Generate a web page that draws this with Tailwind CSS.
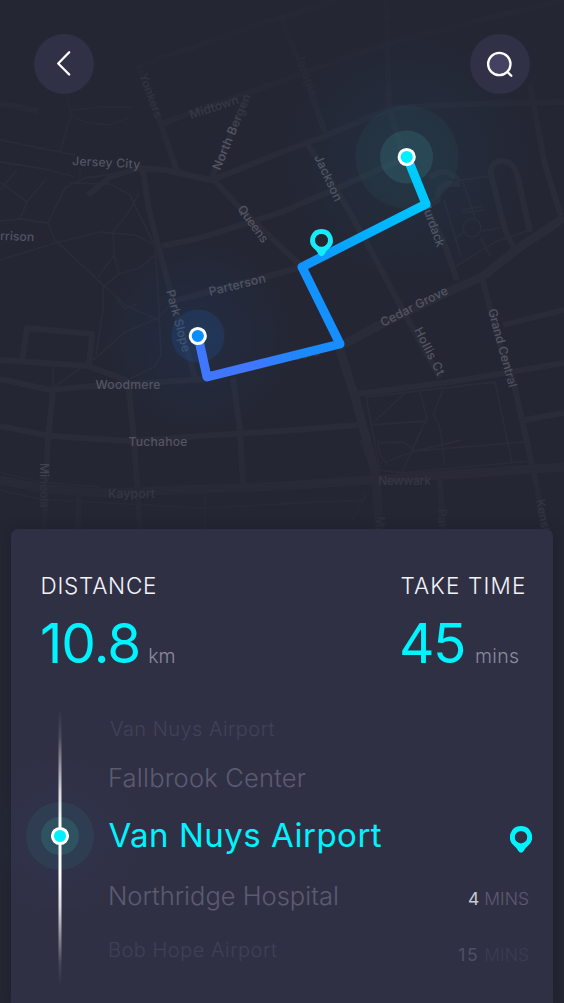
<!DOCTYPE html>
<html lang="en">
<head>
<meta charset="utf-8">
<title>Route</title>
<script src="https://cdn.jsdelivr.net/npm/@tailwindcss/browser@4"></script>
</head>
<body class="bg-[#242633]">
<main class="relative flex h-[1003px] w-[564px] flex-col overflow-hidden bg-[#242633] font-['Inter','Liberation_Sans',sans-serif] font-light">

  <!-- Map -->
  <svg class="absolute inset-0" width="564" height="1003" viewBox="0 0 564 1003" fill="none">
    <defs>
      <linearGradient id="route" gradientUnits="userSpaceOnUse" x1="420" y1="160" x2="200" y2="375">
        <stop offset="0" stop-color="#00d0ff"/><stop offset=".2" stop-color="#00baff"/><stop offset=".5" stop-color="#0f94ff"/><stop offset=".72" stop-color="#1d88ff"/><stop offset=".85" stop-color="#3f78ff"/><stop offset="1" stop-color="#3f78ff"/>
      </linearGradient>
      <radialGradient id="glowBlue"><stop offset="0" stop-color="#1e4a8c" stop-opacity=".18"/><stop offset=".5" stop-color="#1e4a8c" stop-opacity=".09"/><stop offset="1" stop-color="#1e4a8c" stop-opacity="0"/></radialGradient>
      <radialGradient id="glowCyan"><stop offset="0" stop-color="#1f5a84" stop-opacity=".17"/><stop offset=".5" stop-color="#1f5a84" stop-opacity=".09"/><stop offset="1" stop-color="#1f5a84" stop-opacity="0"/></radialGradient>
      <linearGradient id="fade" x1="0" y1="0" x2="0" y2="1">
        <stop offset="0" stop-color="#fff" stop-opacity=".3"/><stop offset=".12" stop-color="#fff" stop-opacity=".35"/><stop offset=".3" stop-color="#fff" stop-opacity=".9"/><stop offset=".82" stop-color="#fff" stop-opacity=".9"/><stop offset="1" stop-color="#fff" stop-opacity=".35"/>
      </linearGradient>
      <mask id="mapFade" maskUnits="userSpaceOnUse" x="0" y="0" width="564" height="540"><rect width="564" height="540" fill="url(#fade)"/></mask>
    </defs>
    <g mask="url(#mapFade)" stroke="#2b2c39" stroke-linejoin="round">
      <g stroke-width="6">
        <path d="M0 103L38 111M138 65L160 122L178 174M160 125L190 113L250 92L282 81L350 56L400 40L564 0M140 65L282 17L340 0M248 94L212 178M212 180L282 152L320 138L392 108L470 104L564 102"/>
        <path d="M88 195L110 177L140 168L165 170L215 181L240 208L302 267M143 170L148 205L158 245L170 290L195 378M162 246L200 238L282 212L340 187L400 160"/>
        <path d="M172 301L190 297L302 267M22 361L27 328L92 334L89 365M0 360L88 366L128 381M0 379L50 390L80 387L207 379M53 390L48 440L44 530M128 381L134 440L140 530M0 426L50 436L130 441L200 436L282 431L358 425M233 378L240 430L243 485M79 495L78 530"/>
        <path d="M357 394L450 382L564 363M482 278L500 345L513 380L532 465L546 530M525 420L564 413M503 325L564 310M440 480L443 530M282 20L310 90L325 132M305 140L340 195L368 245L400 305L440 378M386 0L389 108L400 145L425 205L443 240L457 280"/>
        <path d="M514 248L505 230L491 175Q490 161 502 161Q514 161 518 178L530 232M530 85L545 165L561 216"/>
      </g>
      <path stroke-width="9" d="M0 480L40 488L100 493L282 486L400 478L564 467M338 345L355 397L376 475L379 530M340 346L380 325L450 291L482 277L520 247L564 218"/>
      <g stroke-width="1.800">
        <path d="M67 95L71 115L60 152M71 110L105 107L132 107M71 115L85 122L108 125L132 117M0 140L60 152L75 155M0 162L45 169L75 177M45 180L27 202L20 219M0 182L27 202M0 221L20 219L48 223L55 240L100 282L125 305L158 320M48 223L65 188L85 178L140 170M70 183L110 184L130 195L142 220L155 246L158 290L161 355L155 366L130 379M17 170L0 190M80 170L80 178"/>
        <path d="M0 260L55 243L100 232L135 235L157 246M113 232L114 255L119 273M114 255L98 277M155 255L140 268L119 274L103 287L103 310L96 355M55 386L97 357L125 332L158 318L172 303M113 232L130 210L139 193M117 300L125 309L136 304M53 366V388"/>
        <path d="M0 472L40 482L100 487M0 490L40 499L200 508L365 500M282 503L355 501Q370 502 364 492M366 495L352 520M205 490V530"/>
        <path d="M366 397L495 382L512 462M366 397L380 470L400 473L530 461M360 440L374 475M375 421L406 392M370 425L425 421M420 392L427 418L400 476M443 390L433 415Q442 422 444 465M380 443L403 442L415 451L462 440M415 451L525 442M385 462L415 451M378 440L380 455L388 465"/>
        <path d="M444 200L461 257M455 267L495 242L530 230M462 210L483 206M463 182L475 218M456 181L490 176M454 240L465 231M482 231L500 228M481 238L490 256M462 213L484 210"/>
        <circle cx="472" cy="228" r="9"/><path stroke-width="6" d="M425 208L438 200Q436 186 448 184L460 184M430 178Q445 164 460 182"/>
      </g>
    </g>

    <g font-family="Inter, 'Liberation Sans', sans-serif" font-size="12.200" font-weight="500" fill="#535562" lengthAdjust="spacing">
      <text transform="translate(72 165) rotate(3)" textLength="68">Jersey City</text>
      <text transform="translate(220 171) rotate(-67.500)" textLength="81"><tspan fill="#555765">North B</tspan><tspan fill="#41434f">er</tspan><tspan fill="#343642">gen</tspan></text>
      <text transform="translate(191 119) rotate(-18)" textLength="51" fill="#373946">Midtown</text>
      <text transform="translate(139 75) rotate(70)" textLength="47" fill="#31333e">Yonkers</text>
      <text transform="translate(295 55) rotate(70)" textLength="45" fill="#2a2c38">Jerogle</text>
      <text transform="translate(314 157) rotate(65)" textLength="50">Jackson</text>
      <text transform="translate(237 209) rotate(54)" textLength="43">Queens</text>
      <text transform="translate(0 240) rotate(2)" textLength="34">rrison</text>
      <text transform="translate(210 296) rotate(-14)" textLength="58">Parterson</text>
      <text transform="translate(166 291) rotate(75)" textLength="64">Park Slope</text>
      <text transform="translate(420 201) rotate(70)" textLength="50">Murdack</text>
      <text transform="translate(383 327) rotate(-27)" textLength="74">Cedar Grove</text>
      <text transform="translate(414 330) rotate(63)" textLength="52">Hollis Ct</text>
      <text transform="translate(488 310) rotate(75)" textLength="81"><tspan>Grand Cen</tspan><tspan fill="#4b4d5a">tral</tspan></text>
      <text x="95.500" y="389" textLength="65">Woodmere</text>
      <text x="128.500" y="445.500" textLength="59">Tuchahoe</text>
      <text transform="translate(293 361) rotate(-12)" textLength="28" fill="#373944">Gard</text>
      <text x="108" y="498" textLength="47" fill="#353743">Kayport</text>
      <text x="378" y="485" textLength="53" fill="#353743">Newwark</text>
      <text transform="translate(40 463) rotate(90)" textLength="45"><tspan fill="#41434f">Mi</tspan><tspan fill="#2f313d">neola</tspan></text>
      <text transform="translate(536 500) rotate(80)" fill="#333541">Kensing</text>
      <text transform="translate(376 516) rotate(90)" fill="#2d2f3b">Ma</text>
      <text transform="translate(438 509) rotate(90)" fill="#2d2f3b">Pal</text>
    </g>

    <circle cx="198" cy="336" r="98" fill="url(#glowBlue)"/>
    <circle cx="407" cy="157" r="125" fill="url(#glowCyan)"/>
    <circle cx="407" cy="157" r="51.500" fill="#2f6d70" fill-opacity=".11"/>
    <circle cx="406.500" cy="157" r="26.500" fill="#36767e" fill-opacity=".31"/>
    <circle cx="198" cy="336" r="26.500" fill="#1f4d86" fill-opacity=".31"/>

    <path d="M407 157L426 204L302 267L340 344L207 377L198 336" stroke="url(#route)" stroke-width="9" stroke-linejoin="round"/>
    <circle cx="406.700" cy="157" r="7.600" fill="#00f0ff" stroke="#fff" stroke-width="3"/>
    <circle cx="197.800" cy="336" r="7.600" fill="#0a8dff" stroke="#fff" stroke-width="3"/>
    <path fill="#15ecf7" fill-rule="evenodd" d="M321.500 229a11.200 11.200 0 0 1 7.300 19.800Q326 251 324.300 254.500Q321.500 258 318.700 254.500Q317 251 314.200 248.800A11.200 11.200 0 0 1 321.500 229ZM321.500 234a6.300 6.300 0 1 0 0 12.600a6.300 6.300 0 0 0 0-12.600Z"/>
    <circle cx="321.500" cy="240.300" r="6.300" fill="#242633"/>
  </svg>

  <header class="relative flex h-[529px] shrink-0 items-start justify-between px-[34px] pt-[34px]">
    <button class="h-[60px] w-[60px] rounded-full bg-[#303046]" aria-label="Back">
      <svg width="60" height="60" viewBox="0 0 60 60" fill="none" stroke="#fff" stroke-width="2.300" stroke-linecap="round" stroke-linejoin="round"><path d="M35.200 18.200L24.200 29.500L35.200 40.500"/></svg>
    </button>
    <button class="h-[60px] w-[60px] rounded-full bg-[#303046]" aria-label="Search">
      <svg width="60" height="60" viewBox="0 0 60 60" fill="none" stroke="#fff" stroke-width="2.300" stroke-linecap="round"><circle cx="29.300" cy="30" r="11.200" fill="#434260"/><path d="M37.500 38L41.300 41.800"/></svg>
    </button>
  </header>

  <!-- Trip details -->
  <section class="relative ml-[11px] h-[474px] w-[542px] rounded-t-[7px] bg-[#303045] pt-[45px] shadow-[0_0_14px_rgba(20,20,32,0.3)]">
    <div class="flex justify-between pr-[26px] pl-[29px] whitespace-nowrap">
      <div>
        <h2 class="pl-[0.5px] text-[22.500px] leading-[24px] tracking-[0.75px] text-[#f3f3f8]">DISTANCE</h2>
        <p class="mt-[15px] flex h-[60px] items-baseline leading-[60px]"><span class="text-[55px] font-normal tracking-[-1px] text-[#00f4ff]">10.8</span><span class="ml-[8px] text-[19.500px] text-[#8b8b9f]">km</span></p>
      </div>
      <div class="w-[127px]">
        <h2 class="pl-[0.5px] text-[22.500px] leading-[24px] tracking-[1.15px] text-[#f3f3f8]">TAKE TIME</h2>
        <p class="mt-[15px] flex h-[60px] items-baseline leading-[60px]"><span class="-ml-[1px] text-[55px] font-normal tracking-[-1.500px] text-[#00f4ff]">45</span><span class="ml-[10px] text-[19.500px] tracking-[0.3px] text-[#8b8b9f]">mins</span></p>
      </div>
    </div>

    <div class="mt-[36px] flex">
      <svg class="shrink-0 overflow-visible" width="97" height="262" viewBox="0 0 97 262" fill="none">
        <defs>
          <linearGradient id="rail" x1="0" y1="0" x2="0" y2="1"><stop offset="0" stop-color="#fff" stop-opacity="0"/><stop offset=".1" stop-color="#fff" stop-opacity=".12"/><stop offset=".3" stop-color="#fff" stop-opacity=".8"/><stop offset=".42" stop-color="#fff"/><stop offset=".6" stop-color="#fff"/><stop offset=".72" stop-color="#fff" stop-opacity=".8"/><stop offset=".92" stop-color="#fff" stop-opacity=".1"/><stop offset="1" stop-color="#fff" stop-opacity="0"/></linearGradient>
          <radialGradient id="stopGlow"><stop offset="0" stop-color="#2e4a7c" stop-opacity=".15"/><stop offset="1" stop-color="#2e4a7c" stop-opacity="0"/></radialGradient>
        </defs>
        <circle cx="49" cy="127" r="78" fill="url(#stopGlow)"/>
        <circle cx="49" cy="127" r="34" fill="#2f5a64" fill-opacity=".28"/>
        <circle cx="49" cy="127" r="19" fill="#2f7078" fill-opacity=".42"/>
        <rect x="47.500" y="0" width="3" height="276" fill="url(#rail)"/>
        <circle cx="49" cy="127" r="7.600" fill="#00f0ff" stroke="#fff" stroke-width="3"/>
      </svg>
      <ul class="flex w-[421px] flex-col whitespace-nowrap">
        <li class="flex h-10 items-center pl-[2px] text-[20px] tracking-[0.45px] text-[#414259]">Van Nuys Airport</li>
        <li class="flex h-[58px] items-center text-[25.500px] tracking-[0.2px] text-[#5b5b70]">Fallbrook Center</li>
        <li class="flex h-[57px] items-center justify-between text-[33px] text-[#00f4ff]"><span class="pl-[0.5px] font-normal tracking-[0.5px]">Van Nuys Airport</span>
          <svg class="mt-[7px] -mr-[3px]" width="22" height="27" viewBox="0 0 22 27" fill="#00f4ff"><path fill-rule="evenodd" d="M11 0a11 11 0 0 1 7.200 19.400Q15.500 21.500 13.800 24.800Q11 28.500 8.200 24.800Q6.500 21.500 3.800 19.400A11 11 0 0 1 11 0ZM11 5a6.200 6.200 0 1 0 0 12.400A6.200 6.200 0 0 0 11 5Z"/></svg>
        </li>
        <li class="flex h-16 items-center justify-between text-[25.500px] text-[#5b5b70]"><span>Northridge Hospital</span><span class="mt-[7px] text-[17.500px]"><b class="font-normal text-[#c9c9d4]">4</b> MINS</span></li>
        <li class="flex h-[43px] items-center justify-between text-[20px] text-[#3f4056]"><span class="tracking-[0.5px]">Bob Hope Airport</span><span class="mt-[11px] text-[17.500px] text-[#3b3c52]"><b class="font-normal tracking-[1.700px] text-[#4e4f64]">15</b> MINS</span></li>
      </ul>
    </div>
  </section>
</main>
</body>
</html>
